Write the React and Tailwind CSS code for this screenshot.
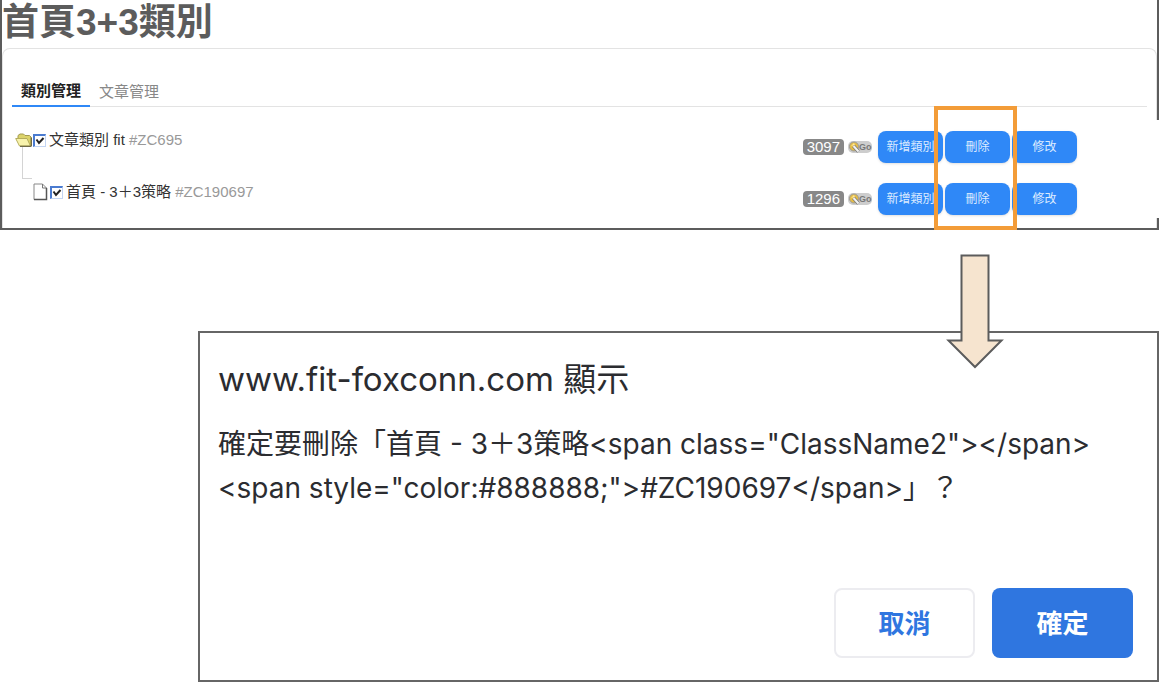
import { useState } from 'react'

const rows = [
  { id: 'ZC695', name: '文章類別 fit', count: 3097, root: true },
  { id: 'ZC190697', name: '首頁 - 3＋3策略', count: 1296, root: false },
]

const tabs = ['類別管理', '文章管理']

function FolderIcon() {
  return (
    <svg width="18" height="14" viewBox="0 0 18 14" className="shrink-0">
      <path d="M3 8V2.5L5 1h3.5L10 2.500h4.500L16 4v8.500H6z" fill="#dcd36a" stroke="#a39b50" />
      <path d="M.7 5.500H12L15.500 13H4.500z" fill="#f8f3ac" stroke="#b5ad5c" strokeLinejoin="round" />
      <path d="M16.300 4.500V13.300H5" fill="none" stroke="#55512f" />
    </svg>
  )
}

function FileIcon() {
  return (
    <svg width="15" height="18" viewBox="0 0 15 18" className="shrink-0">
      <path d="M1 1h8.5l4 4v11.5H1z" fill="#fff" stroke="#888" />
      <path d="M9.5 1v4h4" fill="none" stroke="#777" />
      <path d="M13.5 5v11.5H1" fill="none" stroke="#555" strokeWidth="1.5" />
    </svg>
  )
}

function GoIcon() {
  return (
    <svg width="24" height="12" viewBox="0 0 24 12">
      <rect width="24" height="12" rx="5" fill="#cdcdcd" />
      <circle cx="6" cy="5.5" r="4.5" fill="#e6bd45" stroke="#999" />
      <path d="M3 5l3-3 1 2z" fill="#fbe9a0" />
      <path d="M5.5 5l5 5.500" stroke="#777" strokeWidth="3.5" />
      <path d="M5.500 5l5 5.500" stroke="#f2f2f2" strokeWidth="2" />
      <text x="11" y="9" fontSize="9" fontWeight="700" fill="#777" fontFamily="Liberation Sans, sans-serif">Go</text>
    </svg>
  )
}

function Check({ label }) {
  const [on, setOn] = useState(true)
  return (
    <span className="relative flex h-[13px] w-[13px] shrink-0">
      <input type="checkbox" aria-label={label} checked={on} onChange={() => setOn(!on)}
        className="h-[13px] w-[13px] appearance-none border-t-2 border-l-2 border-r border-b border-t-[#4a7bd0] border-l-[#4a7bd0] border-r-[#c3d5f3] border-b-[#c3d5f3] bg-white" />
      {on && (
        <svg width="13" height="13" viewBox="0 0 13 13" className="pointer-events-none absolute inset-0">
          <path d="M3.5 5.5L6 9l4.5-5" fill="none" stroke="#222" strokeWidth="2" />
        </svg>
      )}
    </span>
  )
}

function ActionButton({ children }) {
  return (
    <button className="h-8 w-[65px] rounded-lg bg-[#2f88f7] text-xs whitespace-nowrap text-[#dcebff] shadow-sm">{children}</button>
  )
}

function Row({ row }) {
  return (
    <li className="flex h-8 items-center justify-between">
      <div className={row.root ? 'flex items-center pb-3.5' : 'flex items-center pb-3.5 pl-[18px]'}>
        {row.root ? <FolderIcon /> : <FileIcon />}
        <span className={row.root ? 'flex items-center gap-[3px]' : 'ml-0.5 flex items-center gap-[3px]'}>
          <Check label={row.name} />
          <span className="text-[15px] leading-5 text-[#333]">
            {row.name} <span className="text-[#999]">#{row.id}</span>
          </span>
        </span>
      </div>
      <div className="flex items-center">
        <span className="mr-1 rounded bg-[#888] px-1 text-[15px] leading-4 text-white">{row.count}</span>
        <a href="#go" aria-label="Go" className="mr-1.5"><GoIcon /></a>
        <div className="flex gap-0.5">
          <ActionButton>新增類別</ActionButton>
          <ActionButton>刪除</ActionButton>
          <ActionButton>修改</ActionButton>
        </div>
      </div>
    </li>
  )
}

function CategoryPanel() {
  const [active, setActive] = useState(tabs[0])
  return (
    <section className="relative mr-[3px] border-x-2 border-b-2 border-[#5c5c5c] font-['Liberation_Sans','Noto_Sans_CJK_TC',sans-serif]">
      <h1 className="h-12 text-[37px] leading-[46px] font-bold text-[#5c5c5c]">首頁3+3類別</h1>
      <div className="rounded-t-lg border-x border-t border-[#e3e3e3] px-[9px] pt-6 pb-[13px]">
        <div className="flex border-b border-[#e3e3e3]">
          {tabs.map(tab => (
            <button key={tab} onClick={() => setActive(tab)}
              className={tab === active
                ? '-mb-px border-b-2 border-[#2f88f7] px-[9px] pt-2 pb-1 text-[15px] leading-5 font-bold text-[#222]'
                : 'px-[9px] pt-2 pb-1 text-[15px] leading-5 text-[#888]'}>
              {tab}
            </button>
          ))}
        </div>
        <ul className="relative mt-6 mr-[70px] ml-[3px] flex flex-col gap-5">
          <span className="absolute top-4 left-[7px] h-8 w-2.5 border-b border-l border-[#d4d4d4]"></span>
          {rows.map(row => <Row key={row.id} row={row} />)}
        </ul>
      </div>
      <div className="absolute -right-0.5 top-[120px] bottom-[10px] w-1 bg-white"></div>
      <div className="pointer-events-none absolute top-[106px] right-[140px] -bottom-0.5 w-[83px] border-4 border-[#f39c38]"></div>
    </section>
  )
}

function Arrow() {
  return (
    <svg width="58" height="116" viewBox="0 0 58 116" className="absolute -top-[79px] right-[153px]">
      <path d="M15.5 1.5h27v85h13L29 113 2.5 86.5h13z" fill="#f6e4cf" stroke="#5c5c5c" strokeWidth="2" />
    </svg>
  )
}

function ConfirmDialog() {
  return (
    <section role="dialog" aria-label="www.fit-foxconn.com 顯示"
      className="relative mt-[101px] mr-[3px] ml-[198px] border-2 border-[#666] px-[18px] pt-6 pb-[22px] font-['Inter','Noto_Sans_CJK_TC',sans-serif] text-[#2b2c30]">
      <Arrow />
      <h2 className="text-[33px] leading-[44px]">www.fit-foxconn.com 顯示</h2>
      <p className="mt-[21px] text-[28px] leading-[44px]">
        確定要刪除「首頁 - 3＋3策略&lt;span class="ClassName2"&gt;&lt;/span&gt;<br />
        &lt;span style="color:#888888;"&gt;#ZC190697&lt;/span&gt;」？
      </p>
      <div className="mt-[78px] mr-[6px] flex justify-end gap-[17px] text-[26px] font-bold">
        <button className="h-[70px] w-[141px] rounded-lg border-2 border-[#ececf0] text-[#2f76e0]">取消</button>
        <button className="h-[70px] w-[141px] rounded-lg bg-[#2f76e0] text-white">確定</button>
      </div>
    </section>
  )
}

export default function App() {
  return (
    <main className="bg-white">
      <CategoryPanel />
      <ConfirmDialog />
    </main>
  )
}
